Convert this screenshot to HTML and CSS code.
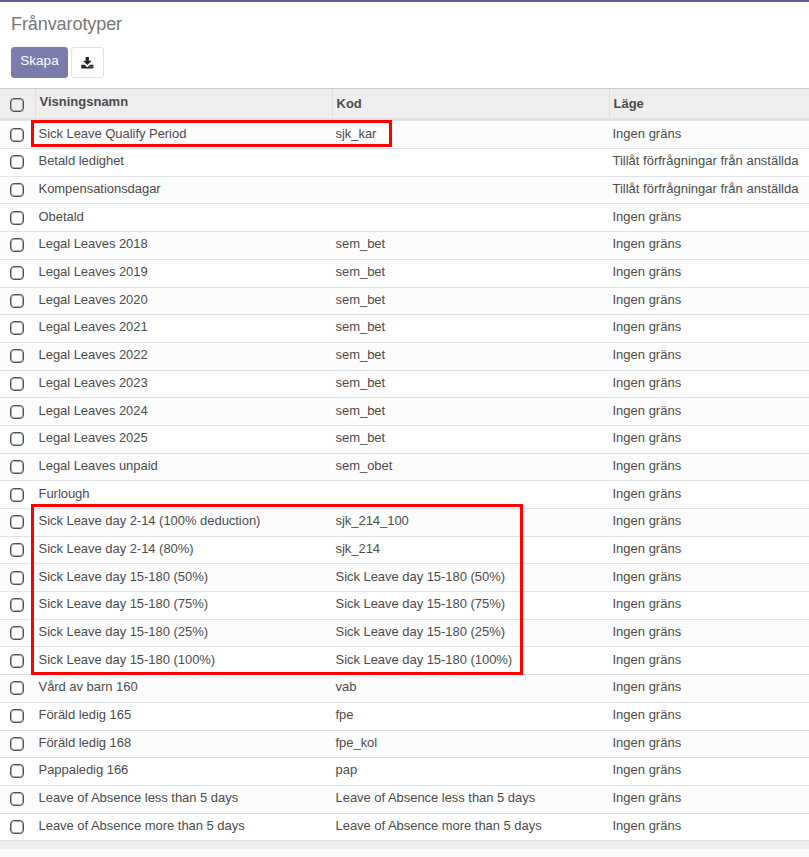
FILE: index.html
```
<!DOCTYPE html>
<html lang="sv">
<head>
<meta charset="utf-8">
<title>Frånvarotyper</title>
<link rel="stylesheet" href="styles.css">
</head>
<body>
<header class="control-panel">
  <h1 class="title">Frånvarotyper</h1>
  <div class="buttons">
    <button class="btn primary">Skapa</button>
    <button class="btn export" aria-label="Export"><svg width="13" height="12" viewBox="0 0 13 12"><path d="M4.700 0h3.200v3.700h2.900L6.300 8 1.900 3.700h2.800z"/><path d="M.8 7.700h2.700L6.300 10.200l2.800-2.500h2.700q.6 0 .6.600v2.500q0 .6-.6.600H.8q-.6 0-.6-.6V8.300q0-.6.600-.6z"/><path class="dots" d="M8.700 9.500h.8v.8h-.8zM10.600 9.500h.8v.8h-.8z"/></svg></button>
  </div>
</header>
<main class="list">
  <div class="head"><span class="check"><i class="box"></i></span><span class="name">Visningsnamn</span><span>Kod</span><span>Läge</span></div>
  <div class="rows" id="rows"></div>
  <div class="foot"></div>
  <div class="mark mark-first"></div>
  <div class="mark mark-group"></div>
</main>
<script src="rows.js"></script>
</body>
</html>
```
FILE: styles.css
```
* { box-sizing: border-box; }
body { margin: 0; height: 857px; overflow: hidden; background: #f9f9f9; color: #4c4c4c; font: 13px/18px "Liberation Sans", Arial, sans-serif; }
.control-panel { height: 88px; border-top: 2px solid #5f5e97; background: #fff; padding: 11px 11px 0; }
.title { margin: 0 0 12px; font-size: 18px; font-weight: 400; line-height: 22px; letter-spacing: -.08px; color: #777; }
.buttons { display: flex; gap: 3px; }
.btn { height: 31px; margin: 0; border-radius: 3px; font: 14px/18px "Liberation Sans", Arial, sans-serif; }
.primary { width: 57px; padding: 0 0 4px; border: 1px solid #7c7bad; background: #7c7bad; color: #fff; font-size: 13.500px; }
.export { width: 33px; padding: 0; border: 1px solid #dee2e6; background: #fff; display: flex; align-items: center; justify-content: center; }
.export svg { fill: #212529; }
.export .dots { fill: #fff; }
.list { position: relative; }
.head, .row { display: grid; grid-template-columns: 35px 297px 277px 200px; }
.head { height: 33px; border-top: 1px solid #c8c8c8; border-bottom: 3px solid #dee2e6; background: #eee; font-weight: 700; }
.head span { padding: 6px 0 0 3.500px; border-left: 1px solid #dfdfdf; }
.head .name { padding-top: 4px; }
.head .check { padding: 9px 0 0 10px; border-left: 0; }
.rows { display: grid; grid-template-rows: repeat(26, 27.6923px); height: 720px; padding-top: .4px; }
.row { border-bottom: 1px solid #dee2e6; background: #fff; white-space: nowrap; letter-spacing: -.04px; }
.row:nth-child(odd) { background: #fcfcfc; }
.row span { padding: 3.250px 0 0 3.500px; }
.row span:last-child { letter-spacing: 0; }
.row .check { padding: 6.250px 0 0 10px; }
.box { display: block; width: 14px; height: 14px; border: 1px solid #495057; border-radius: 4px; background: #fff; box-shadow: inset 0 0 0 1px #a9b0b7; }
.head .box { background: #eee; }
.foot { height: 8px; background: #eee; }
.mark { position: absolute; border: 3px solid #f00; }
.mark-first { left: 31px; top: 32px; width: 361px; height: 27px; }
.mark-group { left: 31px; top: 416px; width: 492px; height: 171px; }
```
FILE: rows.js
```
const types = [
  ["Sick Leave Qualify Period", "sjk_kar"],
  ["Betald ledighet", "", "Tillåt förfrågningar från anställda"],
  ["Kompensationsdagar", "", "Tillåt förfrågningar från anställda"],
  ["Obetald", ""],
  ["Legal Leaves 2018", "sem_bet"],
  ["Legal Leaves 2019", "sem_bet"],
  ["Legal Leaves 2020", "sem_bet"],
  ["Legal Leaves 2021", "sem_bet"],
  ["Legal Leaves 2022", "sem_bet"],
  ["Legal Leaves 2023", "sem_bet"],
  ["Legal Leaves 2024", "sem_bet"],
  ["Legal Leaves 2025", "sem_bet"],
  ["Legal Leaves unpaid", "sem_obet"],
  ["Furlough", ""],
  ["Sick Leave day 2-14 (100% deduction)", "sjk_214_100"],
  ["Sick Leave day 2-14 (80%)", "sjk_214"],
  ["Sick Leave day 15-180 (50%)", "Sick Leave day 15-180 (50%)"],
  ["Sick Leave day 15-180 (75%)", "Sick Leave day 15-180 (75%)"],
  ["Sick Leave day 15-180 (25%)", "Sick Leave day 15-180 (25%)"],
  ["Sick Leave day 15-180 (100%)", "Sick Leave day 15-180 (100%)"],
  ["Vård av barn 160", "vab"],
  ["Föräld ledig 165", "fpe"],
  ["Föräld ledig 168", "fpe_kol"],
  ["Pappaledig 166", "pap"],
  ["Leave of Absence less than 5 days", "Leave of Absence less than 5 days"],
  ["Leave of Absence more than 5 days", "Leave of Absence more than 5 days"]
];
document.getElementById("rows").innerHTML = types.map(([name, code, mode = "Ingen gräns"]) =>
  `<div class="row"><span class="check"><i class="box"></i></span><span>${name}</span><span>${code}</span><span>${mode}</span></div>`
).join("");
```
